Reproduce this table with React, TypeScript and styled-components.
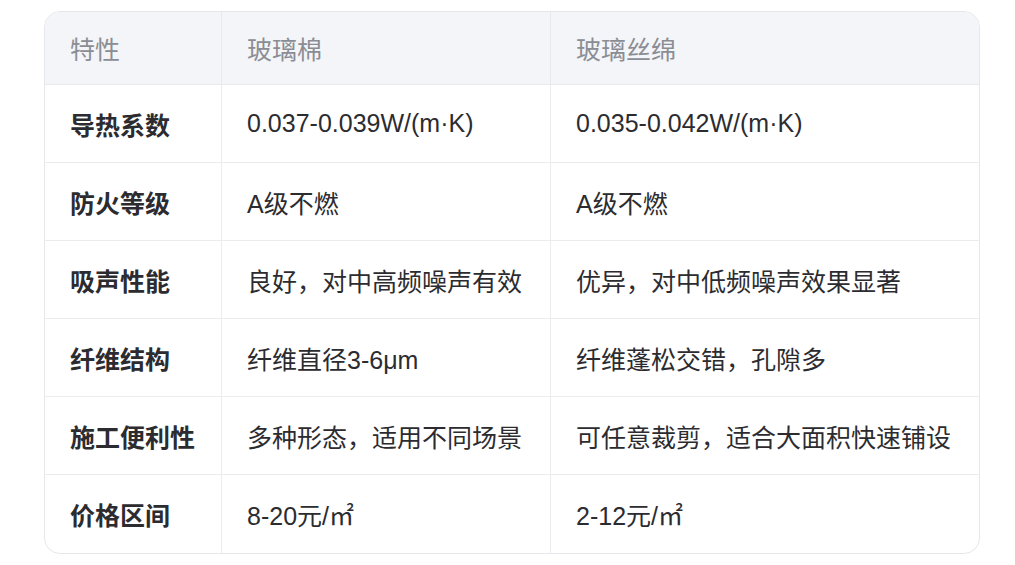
import React from "react";
import styled, { createGlobalStyle } from "styled-components";

const GlobalStyle = createGlobalStyle`
  html, body {
    margin: 0;
    padding: 0;
    background: #ffffff;
  }
  body {
    font-family: "Liberation Sans", Arial, "Noto Sans CJK SC", sans-serif;
  }
`;

const Page = styled.div`
  padding: 11px 0 0 44px;
`;

const TableWrap = styled.div`
  width: 936px;
  border: 1px solid #e6e7eb;
  border-radius: 16px;
  overflow: hidden;
  box-sizing: border-box;
`;

const StyledTable = styled.table`
  width: 100%;
  border-collapse: separate;
  border-spacing: 0;
  table-layout: fixed;
  font-size: 25px;
`;

const HeadCell = styled.th`
  height: 73px;
  padding: 0 25px;
  background: #f4f5f8;
  color: #8b8d95;
  font-weight: 400;
  text-align: left;
  border-left: 1px solid #e8e9ed;
  border-bottom: 1px solid #e8e9ed;
  box-sizing: border-box;

  &:first-child {
    border-left: none;
  }
`;

const Row = styled.tr`
  &:last-child td {
    border-bottom: none;
  }
`;

const Cell = styled.td<{ $label?: boolean }>`
  height: 78px;
  padding: 0 25px;
  color: #2c2c30;
  font-weight: ${({ $label }) => ($label ? 700 : 400)};
  border-left: 1px solid #ececef;
  border-bottom: 1px solid #ececef;
  box-sizing: border-box;
  white-space: nowrap;

  &:first-child {
    border-left: none;
  }
`;

const rows = [
  ["导热系数", "0.037-0.039W/(m·K)", "0.035-0.042W/(m·K)"],
  ["防火等级", "A级不燃", "A级不燃"],
  ["吸声性能", "良好，对中高频噪声有效", "优异，对中低频噪声效果显著"],
  ["纤维结构", "纤维直径3-6μm", "纤维蓬松交错，孔隙多"],
  ["施工便利性", "多种形态，适用不同场景", "可任意裁剪，适合大面积快速铺设"],
  ["价格区间", "8-20元/㎡", "2-12元/㎡"],
];

export default function App() {
  return (
    <>
      <GlobalStyle />
      <Page>
        <TableWrap>
          <StyledTable>
            <colgroup>
              <col style={{ width: 176 }} />
              <col style={{ width: 329 }} />
              <col />
            </colgroup>
            <thead>
              <tr>
                <HeadCell>特性</HeadCell>
                <HeadCell>玻璃棉</HeadCell>
                <HeadCell>玻璃丝绵</HeadCell>
              </tr>
            </thead>
            <tbody>
              {rows.map(([label, a, b]) => (
                <Row key={label}>
                  <Cell $label>{label}</Cell>
                  <Cell>{a}</Cell>
                  <Cell>{b}</Cell>
                </Row>
              ))}
            </tbody>
          </StyledTable>
        </TableWrap>
      </Page>
    </>
  );
}
